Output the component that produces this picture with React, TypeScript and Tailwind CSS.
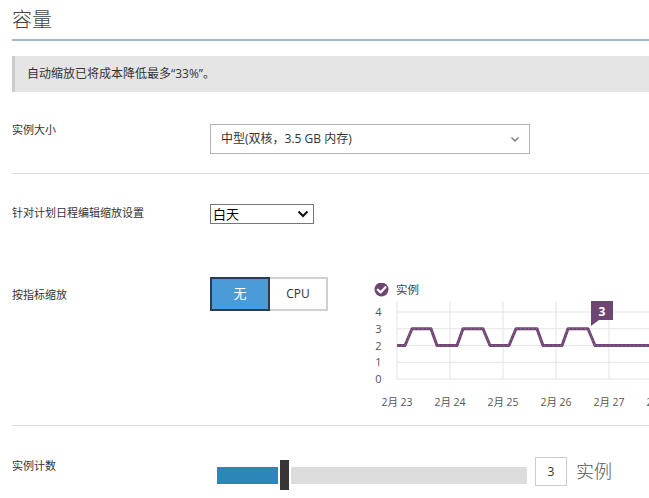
import React from "react";

const FONT = '"Open Sans", "Noto Sans CJK SC", sans-serif';

function Chart() {
  const y2 = 62.5;
  const y3 = 45.75;
  const pts: [number, number][] = [
    [27, y2], [35, y2], [42, y3], [61, y3], [67, y2], [87, y2], [93, y3], [113, y3],
    [120, y2], [139, y2], [146, y3], [167, y3], [173, y2], [192, y2], [198, y3], [218, y3],
    [225, y2], [300, y2],
  ];
  const d = pts.map((p, i) => `${i === 0 ? "M" : "L"}${p[0]} ${p[1]}`).join(" ");
  const hLines = [29, 45.75, 62.5, 79.25, 96];
  const vLines = [27, 80, 133, 186, 239, 292];
  const yLabels = ["4", "3", "2", "1", "0"];
  const xLabels = ["2月 23", "2月 24", "2月 25", "2月 26", "2月 27", "2月 28"];
  return (
    <svg width="300" height="135" viewBox="0 0 300 135" className="block shrink-0" style={{ fontFamily: FONT }}>
      <circle cx="11.5" cy="6.5" r="7" fill="#6d4672" />
      <path d="M7.8 6.7 L10.6 9.4 L15.4 4.2" fill="none" stroke="#fff" strokeWidth="2.2" strokeLinecap="round" strokeLinejoin="round" />
      <text x="26" y="10.5" fontSize="11.5" fill="#444">实例</text>
      {hLines.map((y) => (
        <line key={y} x1="27" x2="300" y1={y} y2={y} stroke="#e3e3e3" strokeWidth="1" />
      ))}
      {vLines.map((x) => (
        <line key={x} x1={x} x2={x} y1="19" y2="96" stroke="#e3e3e3" strokeWidth="1" />
      ))}
      {yLabels.map((t, i) => (
        <text key={t} x="8.5" y={hLines[i] + 4} fontSize="11" fill="#555" textAnchor="middle">{t}</text>
      ))}
      {xLabels.map((t, i) => (
        <text key={t} x={vLines[i]} y="123" fontSize="10.5" fill="#555" textAnchor="middle">{t}</text>
      ))}
      <path d={d} fill="none" stroke="#6d4672" strokeWidth="3" strokeLinejoin="round" />
      <path d={d} fill="none" stroke="#9a6b9c" strokeWidth="1" strokeDasharray="1.5 2.5" strokeLinejoin="round" />
      <path d="M221 18 H243 V37 H229 L221 43 Z" fill="#6d4672" />
      <text x="232" y="32.5" fontSize="12" fontWeight="bold" fill="#fff" textAnchor="middle">3</text>
    </svg>
  );
}

export default function App() {
  return (
    <div className="w-[649px] h-[498px] overflow-hidden bg-white pl-[12px] text-[#333]" style={{ fontFamily: FONT }}>
      {/* Header */}
      <div className="h-[41px] border-b-2 border-[#a3bccd] pt-[6px]">
        <h1 className="text-[20px] leading-[28px] font-light text-[#444]">容量</h1>
      </div>

      {/* Banner */}
      <div className="mt-[15px] h-[36px] bg-[#e5e5e5] border-l-[3px] border-[#cccccc] flex items-center pl-[12px]">
        <span className="text-[12px] text-[#333]">自动缩放已将成本降低最多“33%”。</span>
      </div>

      {/* Row 1 */}
      <div className="flex items-start mt-[30px]">
        <div className="w-[198px] shrink-0 text-[11px] leading-[16px]">实例大小</div>
        <div className="mt-[2px] w-[320px] shrink-0 h-[30px] border border-[#b5b5b5] flex items-center justify-between pl-[10px] pr-[9px]">
          <span className="text-[12px]">中型(双核，3.5 GB 内存)</span>
          <svg width="10" height="7" viewBox="0 0 10 7">
            <path d="M1.5 1.5 L5 5 L8.5 1.5" fill="none" stroke="#777" strokeWidth="1.4" />
          </svg>
        </div>
      </div>
      <div className="mt-[19px] h-px bg-[#dddddd]" />

      {/* Row 2 */}
      <div className="flex items-start mt-[30px]">
        <div className="w-[198px] shrink-0 text-[11px] leading-[16px] mt-[1px]">针对计划日程编辑缩放设置</div>
        <div className="w-[104px] shrink-0 h-[20px] border border-[#767676] flex items-center justify-between pl-[2px] pr-[4px]">
          <span className="text-[13px] leading-[18px] text-black">白天</span>
          <svg width="12" height="8" viewBox="0 0 12 8">
            <path d="M1.5 1.5 L6 6 L10.5 1.5" fill="none" stroke="#111" strokeWidth="2" />
          </svg>
        </div>
      </div>

      {/* Row 3 */}
      <div className="flex items-start mt-[53px]">
        <div className="w-[198px] shrink-0 text-[11px] leading-[16px] mt-[10px]">按指标缩放</div>
        <div className="flex h-[34px] w-[118px] shrink-0">
          <div className="w-[60px] h-full bg-[#4a9bd8] border-2 border-[#2c3c4c] flex items-center justify-center text-white text-[13px]">无</div>
          <div className="w-[58px] h-full bg-white border-2 border-l-0 border-[#d0d0d0] flex items-center justify-center text-[12px] text-[#333]">CPU</div>
        </div>
        <div className="ml-[42px] mt-[6px] shrink-0">
          <Chart />
        </div>
      </div>
      <div className="mt-[7px] h-px bg-[#dddddd]" />

      {/* Row 4 */}
      <div className="flex items-start mt-[31px]">
        <div className="w-[205px] shrink-0 text-[11px] leading-[16px] mt-[1px]">实例计数</div>
        <div className="flex items-center h-[30px] mt-[3px] shrink-0">
          <div className="w-[61px] h-[17px] bg-[#2a87b8]" />
          <div className="ml-[2px] w-[9px] h-[30px] bg-[#3a3535]" />
          <div className="ml-[2px] w-[236px] h-[17px] bg-[#dcdcdc]" />
        </div>
        <div className="ml-[8px] shrink-0 w-[32px] h-[29px] border border-[#cccccc] flex items-center justify-center text-[12px]">3</div>
        <div className="ml-[9px] shrink-0 text-[18px] leading-[29px] font-light text-[#555]">实例</div>
      </div>
    </div>
  );
}
